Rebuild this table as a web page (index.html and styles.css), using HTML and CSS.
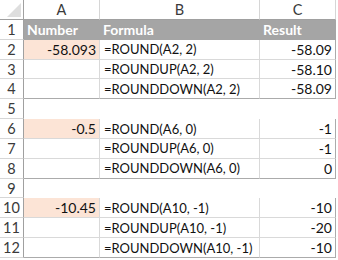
FILE: index.html
```html
<!DOCTYPE html>
<html>
<head>
<meta charset="utf-8">
<link rel="stylesheet" href="styles.css">
</head>
<body>
<div class="sheet">
  <div class="corner"><svg class="tri" width="14" height="14" viewBox="0 0 14 14"><polygon points="14,0 14,14 0,14" fill="#dedede"/></svg></div>
  <div class="ch">A</div><div class="ch">B</div><div class="ch">C</div>

  <div class="rh">1</div><div class="hd">Number</div><div class="hd">Formula</div><div class="hd">Result</div>

  <div class="rh">2</div><div class="c n hl">-58.093</div><div class="c f">=ROUND(A2, 2)</div><div class="c n e">-58.09</div>
  <div class="rh">3</div><div class="c n"></div><div class="c f">=ROUNDUP(A2, 2)</div><div class="c n e">-58.10</div>
  <div class="rh">4</div><div class="c n b"></div><div class="c f b">=ROUNDDOWN(A2, 2)</div><div class="c n e b">-58.09</div>

  <div class="rh">5</div><div class="blank"></div><div class="blank"></div><div class="blank"></div>

  <div class="rh">6</div><div class="c n hl">-0.5</div><div class="c f">=ROUND(A6, 0)</div><div class="c n e">-1</div>
  <div class="rh">7</div><div class="c n"></div><div class="c f">=ROUNDUP(A6, 0)</div><div class="c n e">-1</div>
  <div class="rh">8</div><div class="c n b"></div><div class="c f b">=ROUNDDOWN(A6, 0)</div><div class="c n e b">0</div>

  <div class="rh">9</div><div class="blank"></div><div class="blank"></div><div class="blank"></div>

  <div class="rh">10</div><div class="c n hl">-10.45</div><div class="c f">=ROUND(A10, -1)</div><div class="c n e">-10</div>
  <div class="rh">11</div><div class="c n"></div><div class="c f">=ROUNDUP(A10, -1)</div><div class="c n e">-20</div>
  <div class="rh">12</div><div class="c n b"></div><div class="c f b">=ROUNDDOWN(A10, -1)</div><div class="c n e b">-10</div>
</div>
</body>
</html>
```

FILE: styles.css
```css
html, body {
  margin: 0;
  padding: 0;
  background: #ffffff;
}
.sheet {
  display: grid;
  grid-template-columns: 24px 76px 160px 76px;
  grid-template-rows: 20px repeat(12, 19.83px);
  font-family: Lato, "Liberation Sans", sans-serif;
  font-size: 13px;
  color: #111111;
}
.sheet > div {
  box-sizing: border-box;
  display: flex;
  align-items: center;
  white-space: nowrap;
  overflow: hidden;
}
.corner {
  position: relative;
  border-right: 1px solid #a0a0a0;
  border-bottom: 1px solid #a0a0a0;
}
.tri {
  position: absolute;
  right: 2px;
  bottom: 2px;
}
.ch {
  justify-content: center;
  color: #3a3a3a;
  font-size: 14.5px;
  border-right: 1px solid #d6d6d6;
  border-bottom: 1px solid #a0a0a0;
}
.rh {
  justify-content: center;
  color: #3a3a3a;
  font-size: 14.5px;
  border-right: 1px solid #a0a0a0;
  border-bottom: 1px solid #d6d6d6;
}
.hd {
  background: #a5a5a5;
  color: #ffffff;
  font-weight: 700;
  font-size: 14px;
  padding-left: 3px;
}
.c {
  border-right: 1px solid #d9d9d9;
  border-bottom: 1px solid #d9d9d9;
}
.c.n {
  justify-content: flex-end;
  padding-right: 3px;
  font-size: 14px;
}
.c.f {
  padding-left: 4px;
}
.c.e {
  border-right-color: #ababab;
}
.c.b {
  border-bottom-color: #ababab;
}
.hl {
  background: #fce4d6;
}
.blank {
  background: #ffffff;
}
```
